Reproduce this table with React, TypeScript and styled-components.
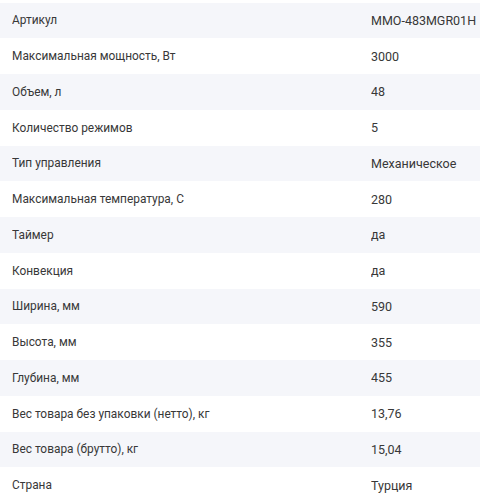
import styled, { createGlobalStyle } from 'styled-components'

const GlobalStyle = createGlobalStyle`
  body {
    margin: 0;
    background: #ffffff;
    font-family: Roboto, "Noto Sans", sans-serif;
  }
`

const Table = styled.div`
  padding-top: 2.5px;
  display: flex;
  flex-direction: column;
`

const Row = styled.div<{ $shaded: boolean }>`
  display: grid;
  grid-template-columns: 359px 1fr;
  align-items: center;
  height: 35.75px;
  padding-left: 12px;
  background: ${p => (p.$shaded ? '#f5f6fa' : '#ffffff')};
  color: #383838;
  font-size: 11.9px;
  white-space: nowrap;
`

const Label = styled.span`
  overflow: hidden;
`

const Value = styled.span`
  overflow: hidden;
  font-size: 12.5px;
`

const specs: [string, string][] = [
  ['Артикул', 'MMO-483MGR01H'],
  ['Максимальная мощность, Вт', '3000'],
  ['Объем, л', '48'],
  ['Количество режимов', '5'],
  ['Тип управления', 'Механическое'],
  ['Максимальная температура, С', '280'],
  ['Таймер', 'да'],
  ['Конвекция', 'да'],
  ['Ширина, мм', '590'],
  ['Высота, мм', '355'],
  ['Глубина, мм', '455'],
  ['Вес товара без упаковки (нетто), кг', '13,76'],
  ['Вес товара (брутто), кг', '15,04'],
  ['Страна', 'Турция'],
]

export default function App() {
  return (
    <>
      <GlobalStyle />
      <Table>
        {specs.map(([label, value], i) => (
          <Row key={label} $shaded={i % 2 === 0}>
            <Label>{label}</Label>
            <Value>{value}</Value>
          </Row>
        ))}
      </Table>
    </>
  )
}
